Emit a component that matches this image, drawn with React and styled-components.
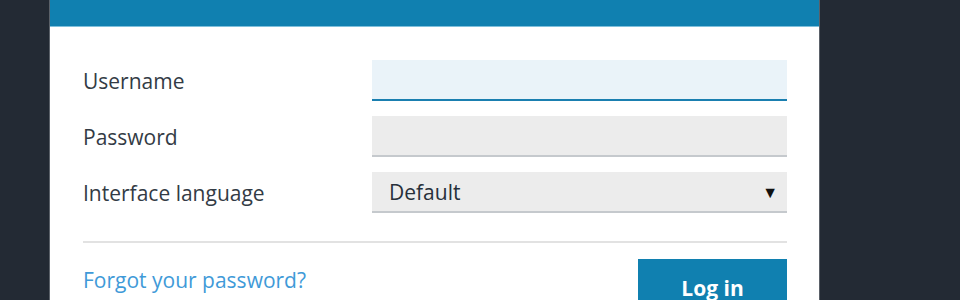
import styled, { createGlobalStyle } from "styled-components";

const GlobalStyle = createGlobalStyle`
  html, body {
    margin: 0;
    padding: 0;
    background: #232a34;
    font-family: "Open Sans", "Liberation Sans", sans-serif;
  }
`;

const Page = styled.div`
  height: 300px;
  overflow: hidden;
  padding-left: 49px;
`;

const Panel = styled.div`
  width: 771px;
  margin-top: -34px;
  background: #ffffff;
  border-left: 1px solid #5b6169;
  border-right: 1px solid #5b6169;
  box-sizing: border-box;
`;

const Header = styled.div`
  height: 61px;
  background: #1080b0;
  border-bottom: 1px solid #7fc0dc;
  display: flex;
  align-items: flex-end;
  padding: 0 0 27px 34px;
  box-sizing: border-box;
  gap: 10px;
`;

const LogoMark = styled.div`
  width: ${(p) => p.w}px;
  height: 8px;
  background: #5aa8cf;
  border-radius: 2px;
`;

const Body = styled.div`
  padding: 33px 32px 0 33px;
`;

const Row = styled.div`
  display: flex;
  align-items: center;
  margin-bottom: 15px;
`;

const Label = styled.label`
  width: 289px;
  font-size: 21px;
  color: #333b45;
`;

const Field = styled.div`
  flex: 1;
  height: 41px;
  box-sizing: border-box;
  background: ${(p) => (p.focused ? "#eaf3f9" : "#ececec")};
  border-bottom: 2px solid ${(p) => (p.focused ? "#1a7fb0" : "#c5c9cd")};
  display: flex;
  align-items: center;
  justify-content: space-between;
  padding: 0 9px 0 17px;
  font-size: 21px;
  color: #27303a;
`;

const Arrow = styled.span`
  font-size: 16px;
  color: #111;
`;

const Divider = styled.div`
  height: 2px;
  background: #e2e2e2;
  margin-top: 28px;
`;

const Footer = styled.div`
  display: flex;
  justify-content: space-between;
  align-items: flex-start;
  padding-top: 16px;
`;

const Link = styled.a`
  font-size: 21px;
  color: #3f9ad8;
  text-decoration: none;
  margin-top: 7px;
`;

const Button = styled.button`
  width: 149px;
  height: 60px;
  border: none;
  background: #1080b0;
  color: #ffffff;
  font-family: inherit;
  font-size: 21px;
  font-weight: 700;
  display: flex;
  justify-content: center;
  padding-top: 15px;
  box-sizing: border-box;
`;

export default function App() {
  return (
    <>
      <GlobalStyle />
      <Page>
        <Panel>
          <Header>
            <LogoMark w={12} />
            <LogoMark w={20} />
          </Header>
          <Body>
            <Row>
              <Label>Username</Label>
              <Field focused />
            </Row>
            <Row>
              <Label>Password</Label>
              <Field />
            </Row>
            <Row>
              <Label>Interface language</Label>
              <Field>
                Default
                <Arrow>▼</Arrow>
              </Field>
            </Row>
            <Divider />
            <Footer>
              <Link href="#">Forgot your password?</Link>
              <Button>Log in</Button>
            </Footer>
          </Body>
        </Panel>
      </Page>
    </>
  );
}
